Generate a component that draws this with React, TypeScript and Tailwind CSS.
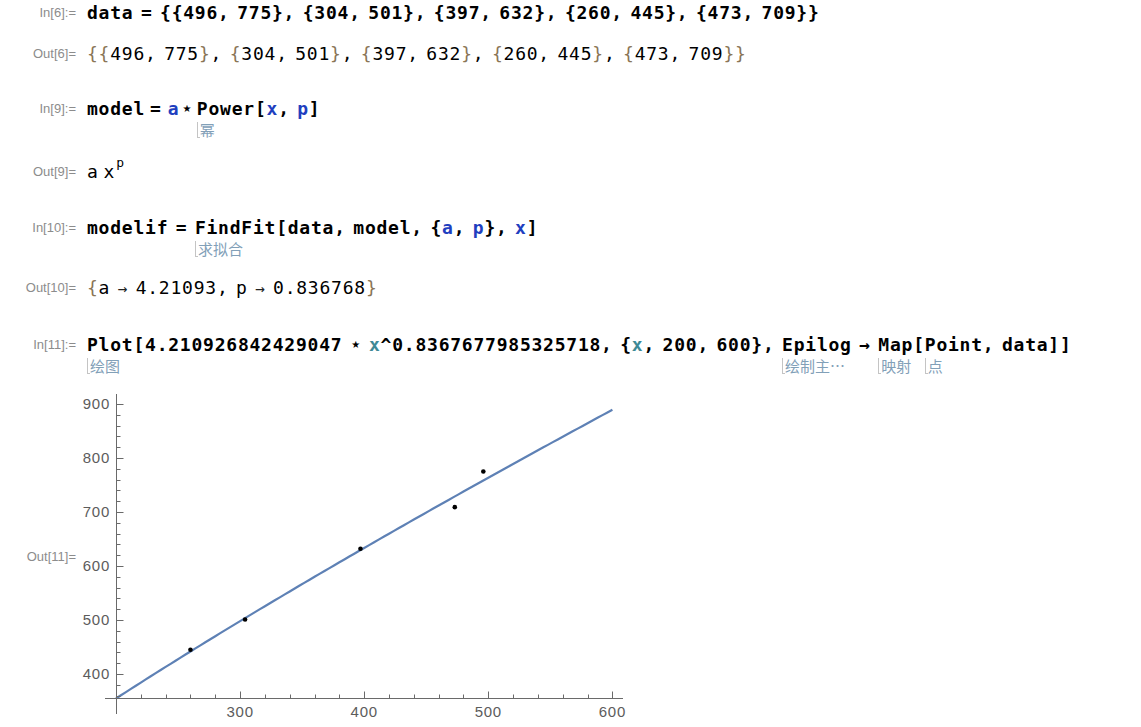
import React from "react";

const MONO = "font-['DejaVu_Sans_Mono',monospace]";

function Label({ children }: { children: React.ReactNode }) {
  return (
    <div className="w-[76px] shrink-0 text-right text-[13px] leading-[24px] tracking-normal [word-spacing:normal] text-[#8c8c8c] font-['Liberation_Sans',Arial,sans-serif]">
      {children}
    </div>
  );
}

function Ann({ children }: { children: React.ReactNode }) {
  return (
    <div className="w-0 whitespace-nowrap flex items-start mt-[-1px] tracking-normal [word-spacing:normal]">
      <span className="inline-block w-[3px] h-[16px] border-l border-b border-[#c4c4c4] mt-[2px] shrink-0" />
      <span className="text-[15px] leading-[20px] text-[#82a0b8] font-['Noto_Sans_CJK_SC',sans-serif] font-normal">
        {children}
      </span>
    </div>
  );
}

function Tok({ children, ann }: { children: React.ReactNode; ann: React.ReactNode }) {
  return (
    <span className="inline-flex flex-col items-start align-top">
      <span>{children}</span>
      <Ann>{ann}</Ann>
    </span>
  );
}

const B = ({ children }: { children: React.ReactNode }) => (
  <span className="text-[#1f3fbf]">{children}</span>
);
const T = ({ children }: { children: React.ReactNode }) => (
  <span className="text-[#3f8a96]">{children}</span>
);
const Br = ({ children }: { children: React.ReactNode }) => (
  <span className="text-[#8a7556] font-light">{children}</span>
);
const Star = () => (
  <span className="inline-block w-[11.6px] text-center text-[10px] leading-[24px] align-top tracking-normal font-['DejaVu_Sans',sans-serif]">
    ★
  </span>
);

function Plot() {
  const W = 560;
  const H = 330;
  const X0 = 36.5;
  const Y0 = 306.5;
  const px = (v: number) => 36 + (v - 200) * 1.241;
  const py = (v: number) => 12 + (900 - v) * 0.54;
  const f = (x: number) => 4.210926842429047 * Math.pow(x, 0.8367677985325718);
  const curve: string[] = [];
  for (let v = 200; v <= 600; v += 4) curve.push(`${px(v).toFixed(2)},${py(f(v)).toFixed(2)}`);
  const yTicks: number[] = [];
  for (let v = 360; v <= 900; v += 20) yTicks.push(v);
  const xTicks: number[] = [];
  for (let v = 220; v <= 600; v += 20) xTicks.push(v);
  const data = [
    [496, 775],
    [304, 501],
    [397, 632],
    [260, 445],
    [473, 709],
  ];
  const axis = "#6a6a6a";
  return (
    <svg width={W} height={H} viewBox={`0 0 ${W} ${H}`} className="block shrink-0">
      <polyline points={curve.join(" ")} fill="none" stroke="#5e81b5" strokeWidth={2.2} strokeLinejoin="round" />
      <line x1={X0} y1={2} x2={X0} y2={322} stroke={axis} strokeWidth={1} />
      <line x1={25} y1={Y0} x2={543} y2={Y0} stroke={axis} strokeWidth={1} />
      {yTicks.map((v) => {
        const y = Math.round(py(v)) + 0.5;
        const major = v % 100 === 0;
        return <line key={"yt" + v} x1={X0} y1={y} x2={X0 + (major ? 7 : 4)} y2={y} stroke={axis} strokeWidth={1} />;
      })}
      {xTicks.map((v) => {
        const x = Math.round(px(v)) + 0.5;
        const major = v % 100 === 0;
        return <line key={"xt" + v} x1={x} y1={Y0} x2={x} y2={Y0 - (major ? 7 : 4)} stroke={axis} strokeWidth={1} />;
      })}
      {[400, 500, 600, 700, 800, 900].map((v) => (
        <text
          key={"yl" + v}
          x={30}
          y={py(v) + 5}
          textAnchor="end"
          fontFamily="Liberation Sans, Arial, sans-serif"
          fontSize={15}
          fill="#5c5c5c"
        >
          {v}
        </text>
      ))}
      {[300, 400, 500, 600].map((v) => (
        <text
          key={"xl" + v}
          x={px(v)}
          y={325}
          textAnchor="middle"
          fontFamily="Liberation Sans, Arial, sans-serif"
          fontSize={15}
          fill="#5c5c5c"
        >
          {v}
        </text>
      ))}
      {data.map(([a, b]) => (
        <circle key={"d" + a} cx={px(a)} cy={py(b)} r={2.3} fill="#000" />
      ))}
    </svg>
  );
}

export default function App() {
  return (
    <div className="w-[1141px] h-[727px] bg-white overflow-hidden text-black">
      <div className={`flex flex-col ${MONO} text-[18px] leading-[24px] tracking-[0.77px] [word-spacing:-4.1px]`}>
        {/* In[6] */}
        <div className="flex items-start mt-[1px]">
          <Label>In[6]:=</Label>
          <div className="ml-[11px] font-bold whitespace-pre">
            {"data = {{496, 775}, {304, 501}, {397, 632}, {260, 445}, {473, 709}}"}
          </div>
        </div>
        {/* Out[6] */}
        <div className="flex items-start mt-[17px]">
          <Label>Out[6]=</Label>
          <div className="ml-[11px] whitespace-pre">
            <Br>{"{"}</Br>
            <Br>{"{"}</Br>
            {"496, 775"}
            <Br>{"}"}</Br>
            {", "}
            <Br>{"{"}</Br>
            {"304, 501"}
            <Br>{"}"}</Br>
            {", "}
            <Br>{"{"}</Br>
            {"397, 632"}
            <Br>{"}"}</Br>
            {", "}
            <Br>{"{"}</Br>
            {"260, 445"}
            <Br>{"}"}</Br>
            {", "}
            <Br>{"{"}</Br>
            {"473, 709"}
            <Br>{"}"}</Br>
            <Br>{"}"}</Br>
          </div>
        </div>
        {/* In[9] */}
        <div className="flex items-start mt-[31px]">
          <Label>In[9]:=</Label>
          <div className="ml-[11px] font-bold whitespace-pre flex items-start">
            <span>model</span>
            <span className="ml-[5px]">=</span>
            <span className="ml-[6px]">
              <B>a</B>
            </span>
            <span className="ml-[2px]">
              <Star />
            </span>
            <span className="ml-[4px]">
              <Tok ann="幂">Power</Tok>
            </span>
            <span>
              [<B>x</B>, <B>p</B>]
            </span>
          </div>
        </div>
        {/* Out[9] */}
        <div className="flex items-start mt-[20px]">
          <Label>Out[9]=</Label>
          <div className="ml-[11px] whitespace-pre flex items-start">
            <span>a</span>
            <span className="ml-[5px]">x</span>
            <span className="text-[13px] leading-[13px] mt-[-4px] ml-[1px]">p</span>
          </div>
        </div>
        {/* In[10] */}
        <div className="flex items-start mt-[32px]">
          <Label>In[10]:=</Label>
          <div className="ml-[11px] font-bold whitespace-pre flex items-start">
            <span>{"modelif = "}</span>
            <Tok ann="求拟合">FindFit</Tok>
            <span>
              {"[data, model, {"}
              <B>a</B>
              {", "}
              <B>p</B>
              {"}, "}
              <B>x</B>
              {"]"}
            </span>
          </div>
        </div>
        {/* Out[10] */}
        <div className="flex items-start mt-[17px]">
          <Label>Out[10]=</Label>
          <div className="ml-[11px] whitespace-pre">
            <Br>{"{"}</Br>
            {"a "}
            <span className="text-[16px] text-[#222]">→</span>
            {" 4.21093, p "}
            <span className="text-[16px] text-[#222]">→</span>
            {" 0.836768"}
            <Br>{"}"}</Br>
          </div>
        </div>
        {/* In[11] */}
        <div className="flex items-start mt-[32px]">
          <Label>In[11]:=</Label>
          <div className="ml-[11px] font-bold whitespace-pre flex items-start">
            <Tok ann="绘图">Plot</Tok>
            <span>
              {"[4.210926842429047 "}
              <Star />
              {" "}
              <T>x</T>
              {"^0.8367677985325718, {"}
              <T>x</T>
              {", 200, 600}, "}
            </span>
            <Tok ann="绘制主⋯">Epilog</Tok>
            <span>{" → "}</span>
            <Tok ann="映射">Map</Tok>
            <span>[</span>
            <Tok ann="点">Point</Tok>
            <span>{", data]]"}</span>
          </div>
        </div>
        {/* Out[11] */}
        <div className="flex items-center mt-[16px]">
          <Label>Out[11]=</Label>
          <div className="ml-[4px]">
            <Plot />
          </div>
        </div>
      </div>
    </div>
  );
}
